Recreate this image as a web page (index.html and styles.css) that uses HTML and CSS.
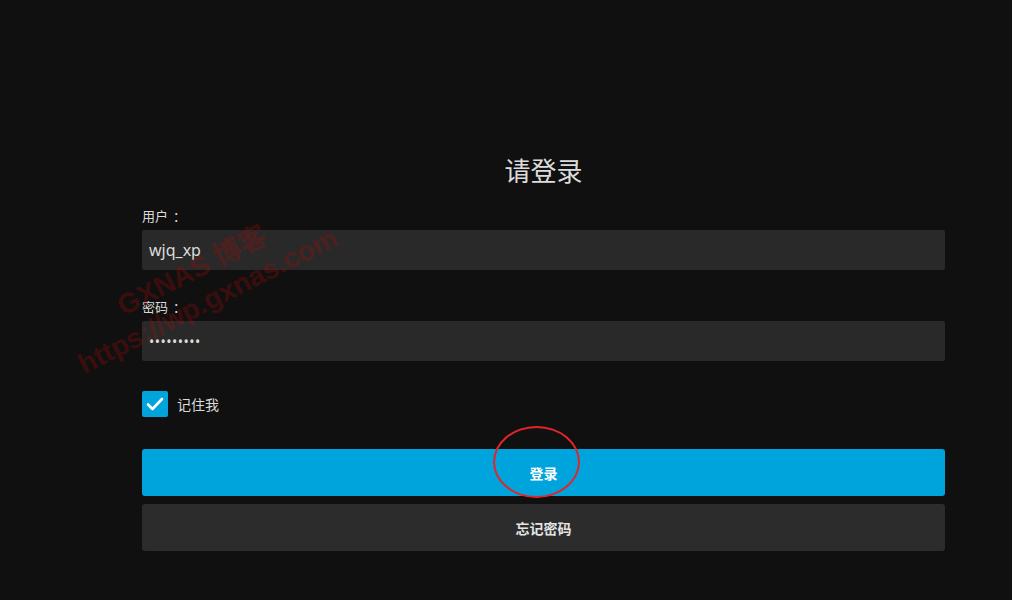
FILE: index.html
```html
<!DOCTYPE html>
<html lang="zh-CN">
<head>
<meta charset="utf-8">
<title>请登录</title>
<link rel="stylesheet" href="styles.css">
</head>
<body>
<div class="page">
  <form class="login">
    <h1 class="title">请登录</h1>
    <label class="label" for="user">用户<span class="colon">：</span></label>
    <input class="field" id="user" type="text" value="wjq_xp">
    <label class="label label-pw" for="pw">密码<span class="colon">：</span></label>
    <input class="field" id="pw" type="password" value="123456789">
    <label class="remember">
      <span class="check">
        <svg width="26" height="26" viewBox="0 0 26 26"><polyline points="6,13.5 10.5,18 20,8" fill="none" stroke="#fff" stroke-width="2.6" stroke-linecap="round" stroke-linejoin="round"/></svg>
      </span>
      <span class="remember-text">记住我</span>
    </label>
    <div class="btn-wrap">
      <button type="button" class="btn btn-primary">登录</button>
      <span class="mark"></span>
    </div>
    <button type="button" class="btn btn-secondary">忘记密码</button>
  </form>
  <div class="watermark">GXNAS 博客<br>https://wp.gxnas.com</div>
</div>
</body>
</html>
```

FILE: styles.css
```css
html, body {
  margin: 0;
  padding: 0;
  background: #101010;
}
body {
  font-family: "Noto Sans", "Noto Sans CJK SC", sans-serif;
  color: #d6d6d6;
}
.page {
  position: relative;
  height: 600px;
  padding: 150px 67px 0 142px;
  box-sizing: border-box;
}
.login {
  display: flex;
  flex-direction: column;
  width: 803px;
}
.title {
  margin: 0 0 16px;
  font-family: "Noto Sans CJK SC", sans-serif;
  font-size: 26px;
  line-height: 40px;
  font-weight: 400;
  text-align: center;
  color: #dcdcdc;
}
.label {
  font-family: "Noto Sans CJK SC", sans-serif;
  font-size: 13px;
  line-height: 20px;
  color: #dadada;
  margin-bottom: 4px;
}
.colon {
  margin-left: 5px;
}
.label-pw {
  margin-top: 27px;
}
.field {
  height: 40px;
  box-sizing: border-box;
  border: 0;
  border-radius: 2px;
  background: #292929;
  color: #dcdcdc;
  font-family: "Noto Sans", sans-serif;
  font-size: 16px;
  padding: 0 7px;
  outline: none;
}
#pw {
  font-size: 14px;
  letter-spacing: 0.5px;
}
.remember {
  display: flex;
  align-items: center;
  gap: 9px;
  margin-top: 30px;
  height: 26px;
}
.check {
  width: 26px;
  height: 26px;
  border-radius: 2px;
  background: #00a4dc;
  display: flex;
}
.remember-text {
  font-family: "Noto Sans CJK SC", sans-serif;
  font-size: 14px;
  color: #dadada;
}
.btn-wrap {
  position: relative;
  margin-top: 32px;
  display: flex;
  flex-direction: column;
}
.btn {
  height: 47px;
  border: 0;
  border-radius: 3px;
  font-family: "Noto Sans CJK SC", sans-serif;
  font-size: 14px;
  font-weight: 700;
  cursor: pointer;
}
.btn-primary {
  background: #00a4dc;
  color: #fff;
}
.btn-secondary {
  margin-top: 8px;
  background: #2c2c2c;
  color: #e4e4e4;
}
.mark {
  position: absolute;
  left: 351px;
  top: -23px;
  width: 87px;
  height: 72px;
  border: 2.5px solid #e0262b;
  border-radius: 50%;
  box-sizing: border-box;
  pointer-events: none;
}
.watermark {
  position: absolute;
  left: 30px;
  top: 252px;
  width: 340px;
  height: 68px;
  line-height: 34px;
  text-align: center;
  font-family: "Liberation Sans", "Noto Sans CJK SC", sans-serif;
  font-weight: 700;
  font-size: 28px;
  color: rgba(170, 10, 10, 0.3);
  transform: rotate(-27deg);
  pointer-events: none;
  white-space: nowrap;
}
```
